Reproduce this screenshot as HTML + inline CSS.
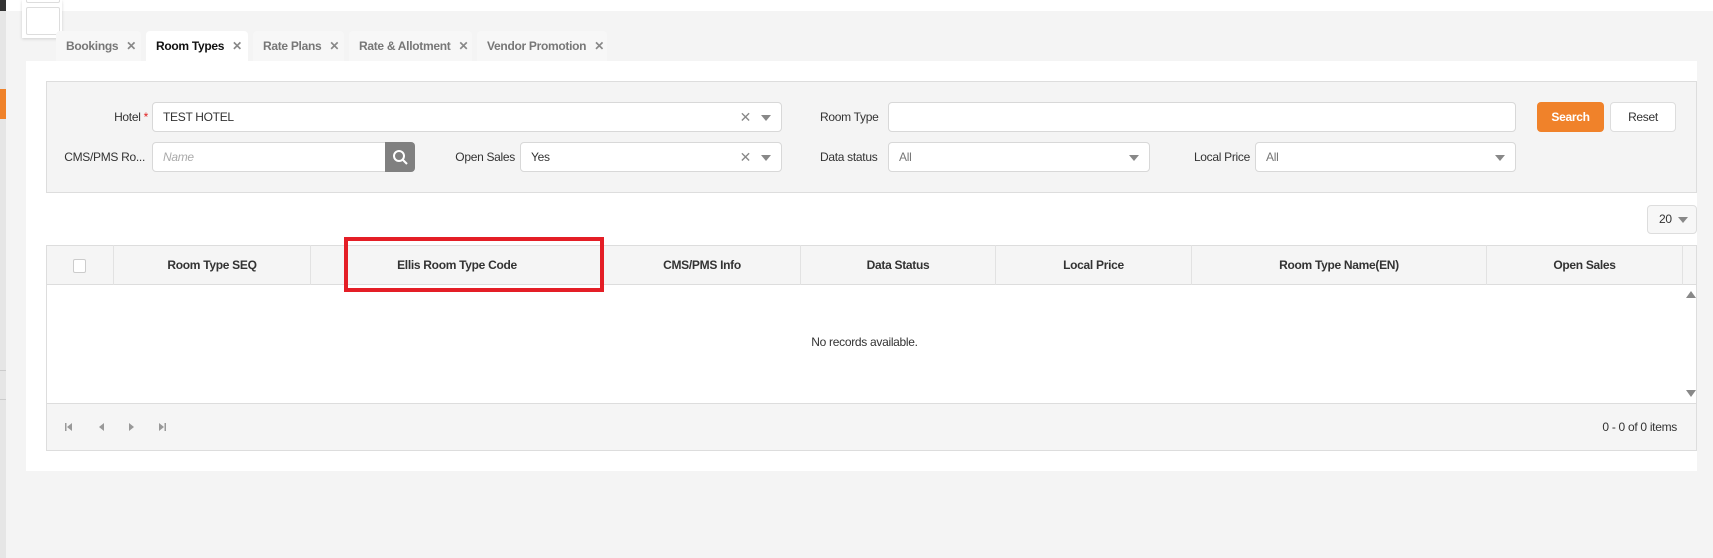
<!DOCTYPE html>
<html><head><meta charset="utf-8"><style>
*{box-sizing:border-box;margin:0;padding:0}
body{width:1713px;height:558px;background:#f4f4f4;font-family:"Liberation Sans",sans-serif;font-size:12px;color:#333;position:relative;overflow:hidden;letter-spacing:-0.3px}
.a{position:absolute}
.tab{position:absolute;top:31px;height:30px;background:#f7f7f7;border-radius:4px 4px 0 0;color:#777;font-weight:bold;font-size:12px;line-height:30px;padding-left:10px}
.tab b{color:#888;margin-left:8px;font-size:12px}
.inp{position:absolute;background:#fff;border:1px solid #d8d8d8;border-radius:4px;height:30px;line-height:28px;padding-left:10px;color:#333}
.lbl{position:absolute;text-align:right;line-height:30px;color:#333}
.caret{position:absolute;right:10px;top:12px;width:0;height:0;border-left:5px solid transparent;border-right:5px solid transparent;border-top:6px solid #888}
.x{position:absolute;right:30px;top:0;color:#888;font-size:14px}
.th{position:absolute;top:245px;height:40px;line-height:40px;text-align:center;border-left:1px solid #e2e2e2;font-weight:bold;color:#333}
</style></head><body>
<div class="a" style="left:0;top:0;width:1713px;height:11px;background:#fff"></div>
<div class="a" style="left:0;top:0;width:6px;height:11px;background:#333"></div>
<div class="a" style="left:0;top:11px;width:6px;height:547px;background:#e6e6e6"></div>
<div class="a" style="left:0;top:89px;width:6px;height:30px;background:#f0822a"></div>
<div class="a" style="left:0;top:370px;width:6px;height:1px;background:#ccc"></div>
<div class="a" style="left:0;top:399px;width:6px;height:1px;background:#ccc"></div>
<div class="a" style="left:22px;top:0;width:40px;height:38px;background:#fff;box-shadow:0 1px 3px rgba(0,0,0,.15)"></div>
<div class="a" style="left:26px;top:-2px;width:34px;height:5px;border:1px solid #ddd;border-radius:2px"></div>
<div class="a" style="left:26px;top:7px;width:34px;height:28px;border:1px solid #ddd;border-radius:2px"></div>

<div class="tab" style="left:56px;width:85px">Bookings<b>✕</b></div>
<div class="tab" style="left:146px;width:102px;background:#fff;color:#111">Room Types<b>✕</b></div>
<div class="tab" style="left:253px;width:91px">Rate Plans<b>✕</b></div>
<div class="tab" style="left:349px;width:123px">Rate &amp; Allotment<b>✕</b></div>
<div class="tab" style="left:477px;width:130px">Vendor Promotion<b>✕</b></div>

<div class="a" style="left:26px;top:61px;width:1671px;height:410px;background:#fff"></div>
<div class="a" style="left:46px;top:81px;width:1651px;height:112px;background:#f4f4f4;border:1px solid #ddd"></div>

<div class="lbl" style="left:60px;top:102px;width:88px">Hotel <span style="color:#e02020">*</span></div>
<div class="inp" style="left:152px;top:102px;width:630px">TEST HOTEL<span class="x">✕</span><span class="caret"></span></div>
<div class="lbl" style="left:60px;top:142px;width:85px">CMS/PMS Ro...</div>
<div class="inp" style="left:152px;top:142px;width:263px;color:#aaa;font-style:italic">Name</div>
<div class="a" style="left:385px;top:142px;width:30px;height:30px;background:#808080;border-radius:0 4px 4px 0"><svg width="30" height="30"><circle cx="14" cy="14" r="5" fill="none" stroke="#fff" stroke-width="2"/><path d="M18 18l4 4" stroke="#fff" stroke-width="2"/></svg></div>
<div class="lbl" style="left:420px;top:142px;width:95px">Open Sales</div>
<div class="inp" style="left:520px;top:142px;width:262px">Yes<span class="x">✕</span><span class="caret"></span></div>

<div class="lbl" style="left:820px;top:102px;width:63px;text-align:left">Room Type</div>
<div class="inp" style="left:888px;top:102px;width:628px"></div>
<div class="lbl" style="left:820px;top:142px;width:63px;text-align:left">Data status</div>
<div class="inp" style="left:888px;top:142px;width:262px;color:#777">All<span class="caret"></span></div>
<div class="lbl" style="left:1160px;top:142px;width:90px">Local Price</div>
<div class="inp" style="left:1255px;top:142px;width:261px;color:#777">All<span class="caret"></span></div>
<div class="a" style="left:1537px;top:102px;width:67px;height:30px;background:#f0822a;border-radius:4px;color:#fff;font-weight:bold;text-align:center;line-height:30px">Search</div>
<div class="a" style="left:1610px;top:102px;width:66px;height:30px;background:#fff;border:1px solid #ddd;border-radius:4px;text-align:center;line-height:28px">Reset</div>

<div class="a" style="left:1647px;top:205px;width:50px;height:29px;background:#f7f7f7;border:1px solid #ddd;border-radius:4px;line-height:27px;padding-left:11px">20<span class="caret" style="top:11px;right:8px"></span></div>

<div class="a" style="left:46px;top:245px;width:1651px;height:206px;border:1px solid #ddd"></div>
<div class="a" style="left:47px;top:246px;width:1649px;height:39px;background:#f5f5f5;border-bottom:1px solid #ddd"></div>
<div class="a" style="left:73px;top:259px;width:13px;height:14px;background:#fff;border:1px solid #ccc;border-radius:2px"></div>
<div class="th" style="left:113px;width:197px">Room Type SEQ</div>
<div class="th" style="left:310px;width:293px">Ellis Room Type Code</div>
<div class="th" style="left:603px;width:197px">CMS/PMS Info</div>
<div class="th" style="left:800px;width:195px">Data Status</div>
<div class="th" style="left:995px;width:196px">Local Price</div>
<div class="th" style="left:1191px;width:295px">Room Type Name(EN)</div>
<div class="th" style="left:1486px;width:196px">Open Sales</div>
<div class="th" style="left:1682px;width:14px"></div>
<div class="a" style="left:344px;top:237px;width:260px;height:55px;border:4px solid #e41e26"></div>
<div class="a" style="left:47px;top:335px;width:1635px;text-align:center;color:#333">No records available.</div>
<div class="a" style="left:1686px;top:291px;border-left:5px solid transparent;border-right:5px solid transparent;border-bottom:7px solid #888"></div>
<div class="a" style="left:1686px;top:390px;border-left:5px solid transparent;border-right:5px solid transparent;border-top:7px solid #888"></div>
<div class="a" style="left:47px;top:403px;width:1649px;height:47px;background:#f5f5f5;border-top:1px solid #ddd"></div>
<svg class="a" style="left:60px;top:420px" width="120" height="14"><g fill="#999"><rect x="5" y="3" width="1.5" height="8"/><path d="M12 3v8l-5-4z"/><path d="M44 3v8l-5-4z"/><path d="M69 3v8l5-4z"/><path d="M99 3v8l5-4z"/><rect x="104.5" y="3" width="1.5" height="8"/></g></svg>
<div class="a" style="left:1500px;top:420px;width:177px;text-align:right;color:#333">0 - 0 of 0 items</div>
</body></html>
